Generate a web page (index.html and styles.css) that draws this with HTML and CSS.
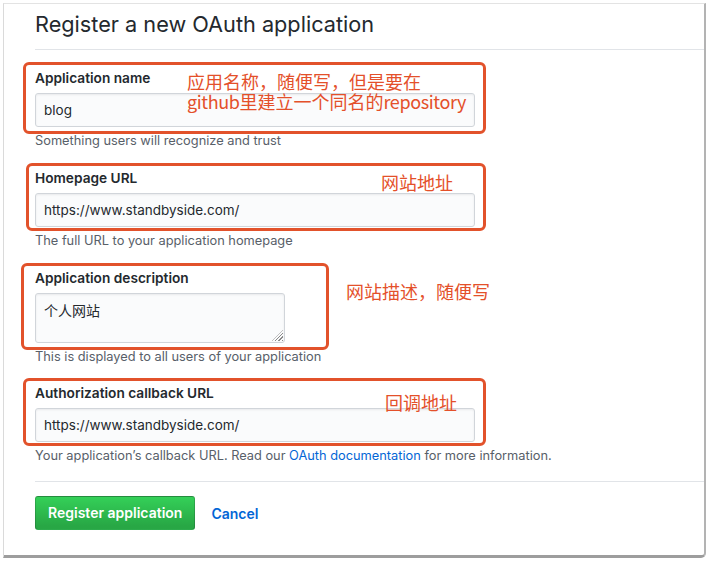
FILE: index.html
```html
<!DOCTYPE html>
<html lang="en">
<head>
<meta charset="utf-8">
<title>Register a new OAuth application</title>
<link rel="stylesheet" href="styles.css">
</head>
<body>
<div class="window">
  <div class="content">
    <h1 class="title">Register a new OAuth application</h1>

    <form class="form">
      <div class="group g1">
        <label class="lbl">Application name</label>
        <input class="field" type="text" value="blog">
        <p class="note">Something users will recognize and trust</p>
        <div class="mark m1"></div>
        <div class="ann a1">应用名称，随便写，但是要在<br><span class="lat">github</span>里建立一个同名的<span class="lat">repository</span></div>
      </div>

      <div class="group g2">
        <label class="lbl">Homepage URL</label>
        <input class="field" type="text" value="https://www.standbyside.com/">
        <p class="note">The full URL to your application homepage</p>
        <div class="mark m2"></div>
        <div class="ann a2">网站地址</div>
      </div>

      <div class="group g3">
        <label class="lbl">Application description</label>
        <span class="ta-wrap"><textarea class="area">个人网站</textarea></span>
        <p class="note">This is displayed to all users of your application</p>
        <div class="mark m3"></div>
        <div class="ann a3">网站描述，随便写</div>
      </div>

      <div class="group g4">
        <label class="lbl">Authorization callback URL</label>
        <input class="field" type="text" value="https://www.standbyside.com/">
        <p class="note">Your application’s callback URL. Read our <a class="link" href="#">OAuth documentation</a> for more information.</p>
        <div class="mark m4"></div>
        <div class="ann a4">回调地址</div>
      </div>

      <div class="actions">
        <button class="btn" type="button">Register application</button>
        <a class="cancel" href="#">Cancel</a>
      </div>
    </form>
  </div>
</div>
</body>
</html>
```

FILE: styles.css
```css
* { box-sizing: border-box; }

html, body {
  margin: 0;
  padding: 0;
  background: #ffffff;
}

body {
  font-family: Inter, "Liberation Sans", "Noto Sans CJK SC", sans-serif;
  color: #24292e;
}

.window {
  position: relative;
  margin: 3px 0 0 3px;
  width: 703px;
  height: 555px;
  border-top: 1px solid #e3e3e3;
  border-left: 1px solid #dadada;
  border-right: 2px solid #b3b3b3;
  border-bottom: 3px solid #9d9d9d;
  border-bottom-right-radius: 5px;
  overflow: hidden;
}

.window::after {
  content: "";
  position: absolute;
  right: -2px;
  top: 3px;
  width: 2px;
  height: 12px;
  background: #333;
}

.content {
  padding-left: 31px;
}

.title {
  margin: 5px 0 0;
  padding-bottom: 10px;
  font-size: 21.7px;
  line-height: 30px;
  font-weight: 400;
  color: #24292e;
  border-bottom: 1px solid #e1e4e8;
}

.form { margin: 0; }

.group {
  position: relative;
  margin-top: 18px;
}

.g4 { margin-top: 17px; }

.lbl {
  display: block;
  font-size: 13.7px;
  line-height: 20px;
  font-weight: 600;
  color: #24292e;
  margin-bottom: 5px;
}

.field {
  display: block;
  width: 440px;
  height: 34px;
  margin: 0;
  padding: 6px 8px;
  border: 1px solid #d1d5da;
  border-radius: 3px;
  background: #fafbfc;
  box-shadow: inset 0 1px 2px rgba(27, 31, 35, 0.075);
  font-family: Inter, "Liberation Sans", sans-serif;
  font-size: 13.5px;
  line-height: 20px;
  color: #24292e;
  outline: none;
}

.ta-wrap {
  position: relative;
  display: block;
  width: 250px;
  height: 50px;
}

.ta-wrap::after {
  content: "";
  position: absolute;
  right: 2px;
  bottom: 2px;
  width: 11px;
  height: 11px;
  background: repeating-linear-gradient(135deg, transparent 0 1.6px, #8a8a8a 1.6px 2.6px);
  clip-path: polygon(100% 0, 100% 100%, 0 100%);
}

.area {
  display: block;
  width: 250px;
  height: 50px;
  margin: 0;
  padding: 6px 8px;
  border: 1px solid #d1d5da;
  border-radius: 3px;
  background: #fafbfc;
  box-shadow: inset 0 1px 2px rgba(27, 31, 35, 0.075);
  font-family: "Noto Sans CJK SC", sans-serif;
  font-size: 14px;
  line-height: 20px;
  color: #24292e;
  resize: none;
  outline: none;
}

.note {
  margin: 5px 0 0;
  font-size: 12.8px;
  line-height: 18px;
  color: #586069;
}

.link {
  color: #0366d6;
  text-decoration: none;
}

.mark {
  position: absolute;
  border: 3px solid #e2522b;
  border-radius: 6px;
  pointer-events: none;
}

.m1 { top: -6px; left: -12px; width: 463px; height: 72px; }
.m2 { top: -5px; left: -9px; width: 460px; height: 68px; }
.m3 { top: -5px; left: -14px; width: 308px; height: 87px; }
.m4 { top: -5px; left: -12px; width: 463px; height: 68px; }

.ann {
  position: absolute;
  font-family: "Noto Sans CJK SC", sans-serif;
  font-size: 18px;
  line-height: 20px;
  color: #e4502a;
  white-space: nowrap;
}

.lat { letter-spacing: -0.4px; }

.a1 { top: 3px; left: 152px; }
.a2 { top: 4px; left: 346px; }
.a3 { top: 13px; left: 311px; }
.a4 { top: 9px; left: 350px; }

.actions {
  display: flex;
  align-items: center;
  margin-top: 16px;
  padding-top: 14px;
  border-top: 1px solid #e1e4e8;
}

.btn {
  height: 34px;
  padding: 6px 12px;
  border: 1px solid rgba(27, 31, 35, 0.2);
  border-radius: 3px;
  background: linear-gradient(180deg, #34d058, #28a745 90%);
  color: #ffffff;
  font-family: Inter, "Liberation Sans", sans-serif;
  font-size: 14px;
  line-height: 20px;
  font-weight: 600;
}

.cancel {
  margin-left: 16px;
  color: #0366d6;
  font-size: 14px;
  font-weight: 600;
  text-decoration: none;
}
```
